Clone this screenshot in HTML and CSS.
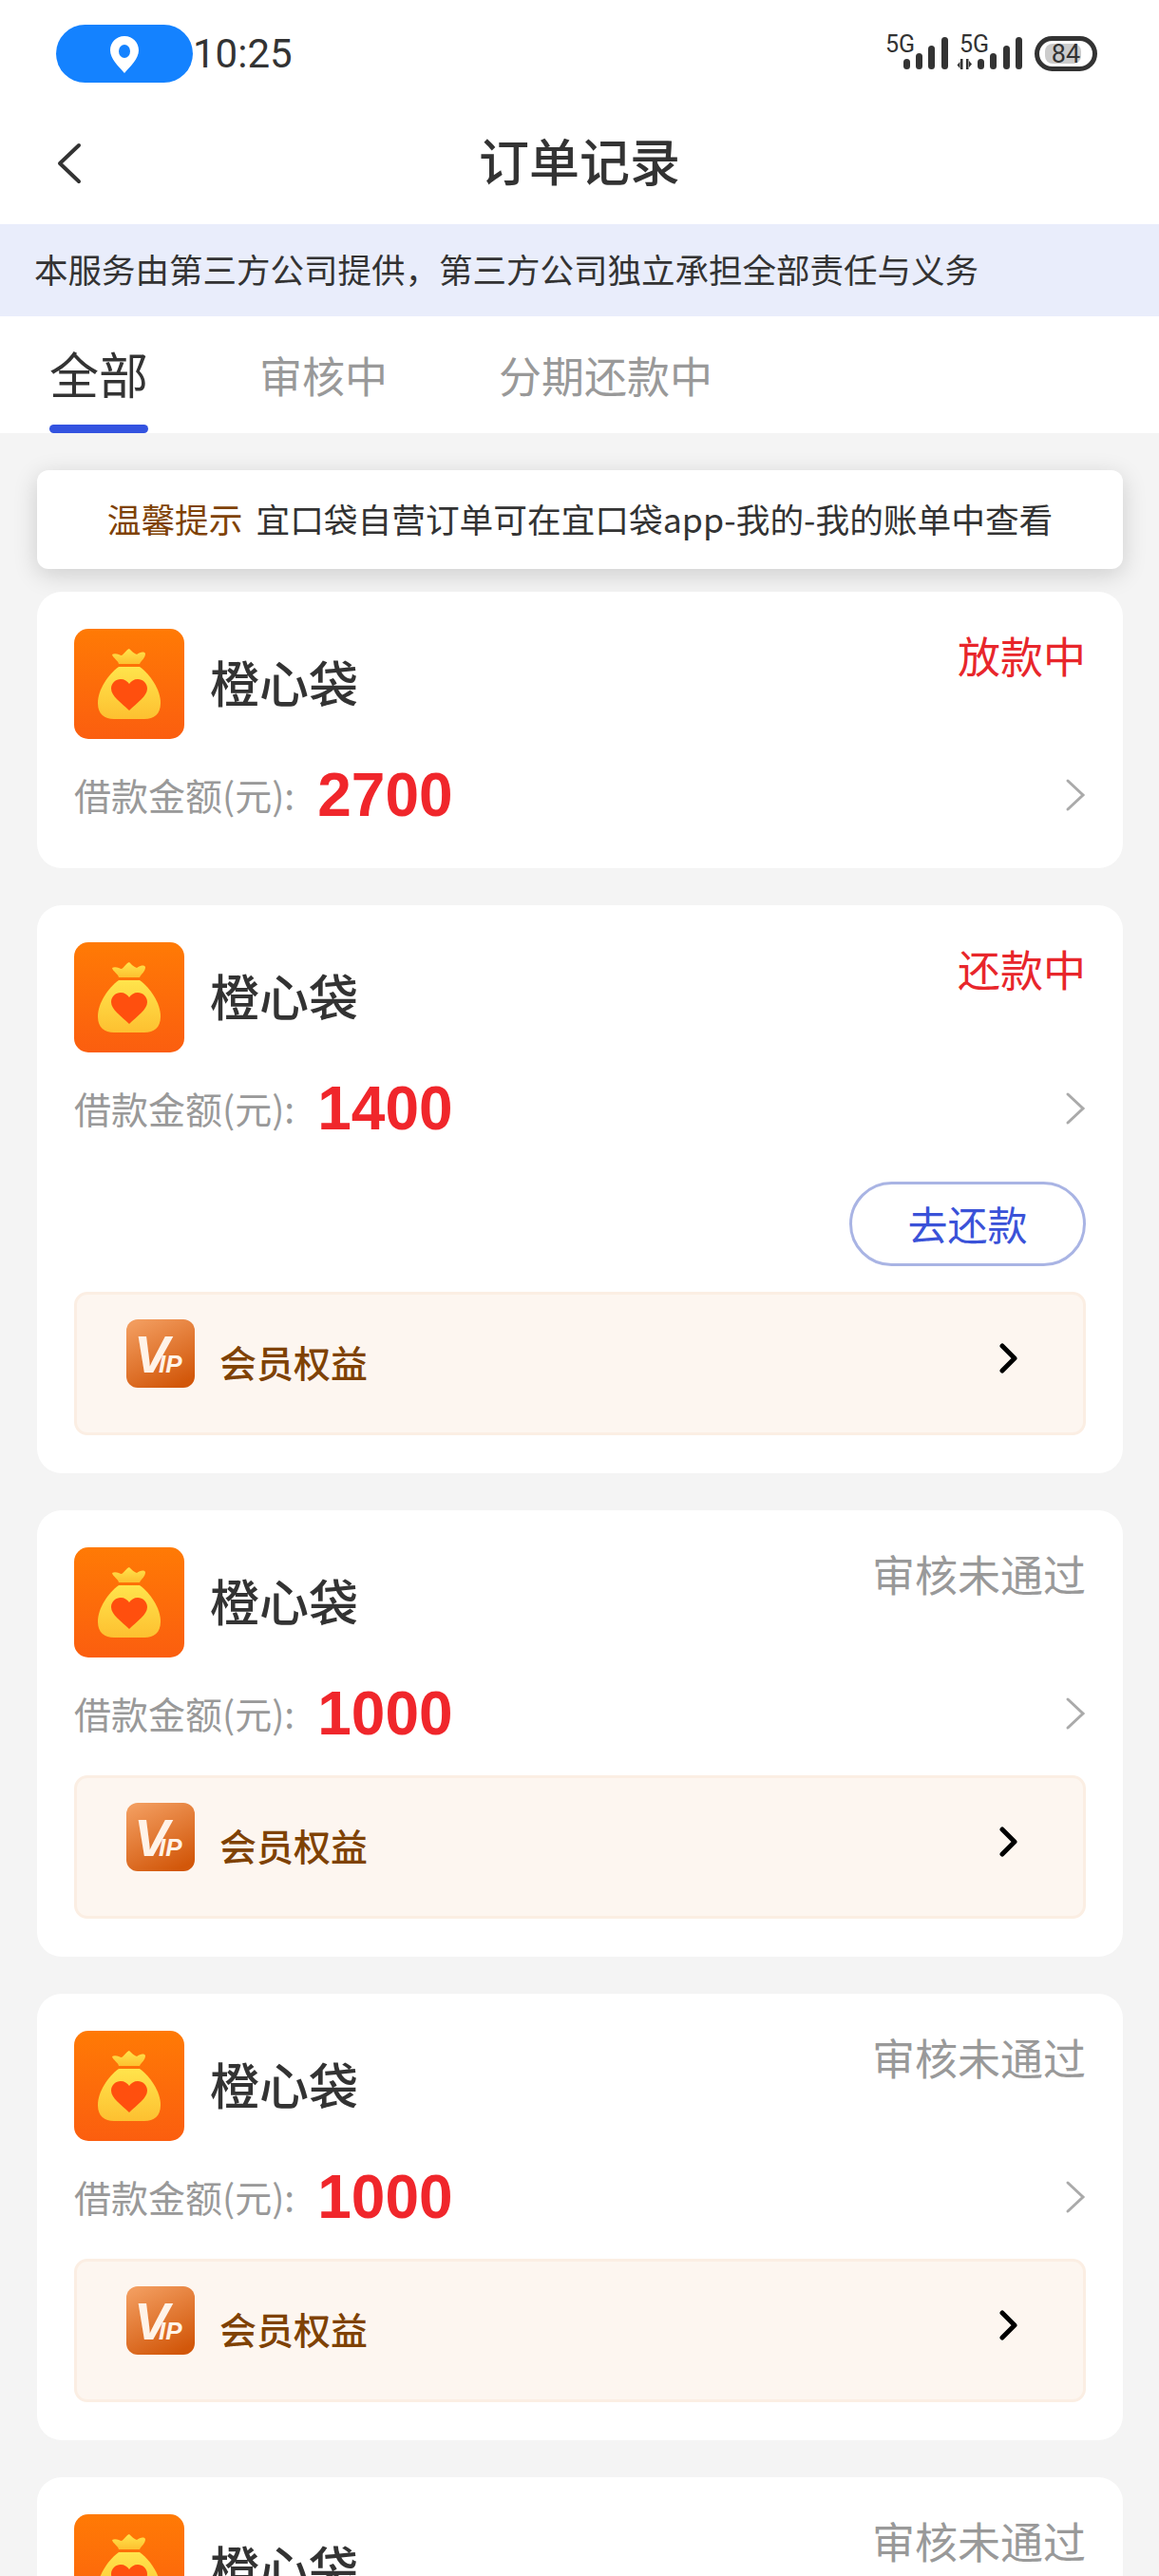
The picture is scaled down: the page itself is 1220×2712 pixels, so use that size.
FILE: index.html
```html
<!DOCTYPE html>
<html lang="zh-CN">
<head>
    <meta charset="UTF-8">
    <meta name="viewport" content="width=device-width, initial-scale=1.0">
    <title>订单记录</title>
    <link rel="stylesheet" href="styles.css">
</head>
<body>

    <svg class="defs">
        <defs>
            <linearGradient id="bagBg" x1="0" y1="0" x2="0" y2="1">
                <stop offset="0" stop-color="#ff7a05"/>
                <stop offset="1" stop-color="#fb5e0f"/>
            </linearGradient>
            <linearGradient id="bagFill" x1="0" y1="0" x2="0" y2="1">
                <stop offset="0" stop-color="#ffe44c"/>
                <stop offset="1" stop-color="#fdc030"/>
            </linearGradient>
            <linearGradient id="vipBg" x1="0.2" y1="0" x2="0.7" y2="1">
                <stop offset="0" stop-color="#f29c5e"/>
                <stop offset="1" stop-color="#d2570a"/>
            </linearGradient>
            <symbol id="bag" viewBox="0 0 116 116">
                <rect width="116" height="116" rx="15" fill="url(#bagBg)"/>
                <path d="M40 27C44 25 48 28 50 28C53 26 55 22 58 21C61 24 63 26 66 27C69 25 73 23 75 26C75 31 71 33 69 37H47C46 33 41 31 40 27Z" fill="url(#bagFill)"/>
                <path d="M47 40H69C80 48 91 64 91 78C91 90 84 95 74 95H42C32 95 25 90 25 78C25 64 36 48 47 40Z" fill="url(#bagFill)"/>
                <path d="M58 86C50 78 39 71 39 63C39 57 44 53 49 53C53 53 56 55 58 58C60 55 63 53 67 53C72 53 77 57 77 63C77 71 66 78 58 86Z" fill="#ff4f0e"/>
            </symbol>
            <symbol id="vip" viewBox="0 0 72 72">
                <rect width="72" height="72" rx="12" fill="url(#vipBg)"/>
                <text x="8" y="56" class="vip-v">V</text>
                <text x="34" y="56" class="vip-ip">IP</text>
            </symbol>
            <symbol id="arrow" viewBox="0 0 22 36">
                <polyline points="3,3 19,18 3,33" fill="none" stroke="#aaa" stroke-width="3" stroke-linecap="round"/>
            </symbol>
            <symbol id="arrowDark" viewBox="0 0 20 32">
                <polyline points="3,3 16,16 3,29" fill="none" stroke="#000" stroke-width="5" stroke-linecap="round" stroke-linejoin="round"/>
            </symbol>
        </defs>
    </svg>

    <div class="status-bar">
        <div class="location-pill">
            <svg width="32" height="40" viewBox="0 0 32 40">
                <path d="M16 1C7 1 1 8 1 16C1 25 10 33 16 40C22 33 31 25 31 16C31 8 25 1 16 1Z" fill="#fff"/>
                <ellipse cx="16" cy="17" rx="6" ry="7" fill="#1482ff"/>
            </svg>
        </div>
        <span class="time">10:25</span>
        <svg class="signal" width="230" height="60" viewBox="0 -9 230 60">
            <text x="7" y="19" class="net">5G</text>
            <rect x="26" y="26" width="7" height="11" rx="3.5"/>
            <rect x="39" y="20" width="7" height="17" rx="3.5"/>
            <rect x="52" y="12" width="7" height="25" rx="3.5"/>
            <rect x="66" y="3" width="7" height="34" rx="3.5"/>
            <text x="85" y="19" class="net">5G</text>
            <path d="M86 26h2.500v11h-2.500zM85.500 29l-3 3.500 3 3.500zM92 26h2.500v11h-2.500zM95 28l3 3.500-3 3.500z"/>
            <rect x="104" y="26" width="7" height="11" rx="3.5"/>
            <rect x="117" y="20" width="7" height="17" rx="3.5"/>
            <rect x="131" y="12" width="7" height="25" rx="3.5"/>
            <rect x="144" y="3" width="7" height="34" rx="3.5"/>
            <rect x="175" y="10" width="38" height="21" rx="8" fill="#ccc"/>
            <rect x="166.500" y="4.500" width="61" height="32" rx="16" fill="none" stroke="#333" stroke-width="5"/>
            <text x="197" y="30" class="batt">84</text>
        </svg>
    </div>

    <div class="nav">
        <svg class="back" width="28" height="44" viewBox="0 0 28 44">
            <polyline points="24,3 4,22 24,41" fill="none" stroke="#333" stroke-width="4" stroke-linecap="round" stroke-linejoin="round"/>
        </svg>
        <h1>订单记录</h1>
    </div>

    <div class="notice">本服务由第三方公司提供，第三方公司独立承担全部责任与义务</div>

    <div class="tabs">
        <div class="tab tab-on">全部</div>
        <div class="tab">审核中</div>
        <div class="tab">分期还款中</div>
    </div>

    <div class="list">
        <div class="tip"><span class="tip-label">温馨提示</span>宜口袋自营订单可在宜口袋app-我的-我的账单中查看</div>

        <div class="card card-plain">
            <div class="card-head">
                <svg class="logo"><use href="#bag"/></svg>
                <span class="name">橙心袋</span>
                <span class="status status-red">放款中</span>
            </div>
            <div class="row">
                <span class="label">借款金额(元):</span>
                <span class="amount">2700</span>
                <svg class="row-arrow"><use href="#arrow"/></svg>
            </div>
        </div>

        <div class="card">
            <div class="card-head">
                <svg class="logo"><use href="#bag"/></svg>
                <span class="name">橙心袋</span>
                <span class="status status-red">还款中</span>
            </div>
            <div class="row">
                <span class="label">借款金额(元):</span>
                <span class="amount">1400</span>
                <svg class="row-arrow"><use href="#arrow"/></svg>
            </div>
            <div class="pay-row"><div class="pay-btn">去还款</div></div>
            <div class="vip">
                <svg class="vip-icon"><use href="#vip"/></svg>
                <span class="vip-text">会员权益</span>
                <svg class="vip-arrow"><use href="#arrowDark"/></svg>
            </div>
        </div>

        <div class="card">
            <div class="card-head">
                <svg class="logo"><use href="#bag"/></svg>
                <span class="name">橙心袋</span>
                <span class="status">审核未通过</span>
            </div>
            <div class="row">
                <span class="label">借款金额(元):</span>
                <span class="amount">1000</span>
                <svg class="row-arrow"><use href="#arrow"/></svg>
            </div>
            <div class="vip">
                <svg class="vip-icon"><use href="#vip"/></svg>
                <span class="vip-text">会员权益</span>
                <svg class="vip-arrow"><use href="#arrowDark"/></svg>
            </div>
        </div>

        <div class="card">
            <div class="card-head">
                <svg class="logo"><use href="#bag"/></svg>
                <span class="name">橙心袋</span>
                <span class="status">审核未通过</span>
            </div>
            <div class="row">
                <span class="label">借款金额(元):</span>
                <span class="amount">1000</span>
                <svg class="row-arrow"><use href="#arrow"/></svg>
            </div>
            <div class="vip">
                <svg class="vip-icon"><use href="#vip"/></svg>
                <span class="vip-text">会员权益</span>
                <svg class="vip-arrow"><use href="#arrowDark"/></svg>
            </div>
        </div>

        <div class="card">
            <div class="card-head">
                <svg class="logo"><use href="#bag"/></svg>
                <span class="name">橙心袋</span>
                <span class="status">审核未通过</span>
            </div>
        </div>
    </div>

</body>
</html>
```
FILE: styles.css
```css
* {
    margin: 0;
    padding: 0;
    box-sizing: border-box;
}

html, body {
    height: 2712px;
    overflow: hidden;
}

body {
    font-family: "Noto Sans CJK SC", "Noto Sans", sans-serif;
    background-color: #f4f4f4;
    color: #333;
}

.defs {
    display: block;
    width: 0;
    height: 0;
}

.vip-v {
    font-family: "Liberation Sans", sans-serif;
    font-size: 56px;
    font-weight: 700;
    font-style: italic;
    fill: #fff3e8;
}

.vip-ip {
    font-family: "Liberation Sans", sans-serif;
    font-size: 26px;
    font-weight: 700;
    font-style: italic;
    fill: #fff3e8;
}

/* status bar */
.status-bar {
    display: flex;
    align-items: center;
    height: 107px;
    padding: 26px 65px 20px 59px;
    background: #fff;
}

.location-pill {
    display: flex;
    align-items: center;
    justify-content: center;
    width: 144px;
    height: 61px;
    border-radius: 31px;
    background: #1482ff;
}

.time {
    font-family: Roboto, sans-serif;
    font-size: 42px;
    color: #333;
}

.signal {
    margin-left: auto;
    fill: #333;
}

.net {
    font-family: Roboto, sans-serif;
    font-size: 25px;
    fill: #333;
}

.batt {
    font-family: Roboto, sans-serif;
    font-size: 27px;
    fill: #333;
    text-anchor: middle;
}

/* title */
.nav {
    display: grid;
    grid-template-columns: 1fr auto 1fr;
    align-items: center;
    height: 129px;
    padding-left: 59px;
    padding-right: 59px;
    background: #fff;
}

.nav h1 {
    margin-bottom: 7px;
    font-size: 53px;
    font-weight: 500;
    line-height: 70px;
    color: #333;
}

.notice {
    height: 97px;
    padding-left: 36px;
    font-size: 35.5px;
    line-height: 93px;
    color: #333;
    background: #e9edfb;
}

/* tabs */
.tabs {
    display: flex;
    gap: 117px;
    height: 123px;
    padding-left: 52px;
    background: #fff;
}

.tab {
    position: relative;
    font-size: 45px;
    line-height: 123px;
    color: #999;
}

.tab-on {
    font-size: 52px;
    line-height: 120px;
    color: #333;
}

.tab-on::after {
    content: "";
    position: absolute;
    left: 0;
    right: 0;
    bottom: 0;
    height: 9px;
    border-radius: 5px;
    background: #3353e0;
}

/* list */
.list {
    padding: 39px 38px 0 39px;
}

.tip {
    height: 104px;
    margin-bottom: 24px;
    font-size: 35.7px;
    line-height: 102px;
    text-align: center;
    color: #333;
    background: #fff;
    border-radius: 12px;
    box-shadow: 0 6px 26px rgba(0, 0, 0, 0.16);
}

.tip-label {
    margin-right: 14px;
    color: #7f4204;
}

.card {
    margin-bottom: 39px;
    padding: 39px 39px 40px;
    background: #fff;
    border-radius: 26px;
}

.card-plain {
    padding-bottom: 46px;
}

.card-head {
    display: flex;
    align-items: center;
}

.logo {
    flex: none;
    width: 116px;
    height: 116px;
}

.name {
    margin-left: 27px;
    margin-bottom: 6px;
    font-size: 52px;
    font-weight: 500;
    color: #333;
}

.status {
    align-self: flex-start;
    margin-left: auto;
    font-size: 45px;
    line-height: 56px;
    color: #999;
}

.status-red {
    color: #e8262b;
}

.row {
    display: flex;
    align-items: center;
    height: 60px;
    margin-top: 30px;
}

.label {
    margin-bottom: 5px;
    font-size: 39px;
    color: #999;
}

.amount {
    margin-left: 24px;
    margin-bottom: 2px;
    font-family: "Liberation Sans", sans-serif;
    font-size: 64px;
    font-weight: 700;
    color: #f0262b;
}

.row-arrow {
    width: 22px;
    height: 36px;
    margin-left: auto;
    margin-bottom: 2px;
}

.pay-row {
    display: flex;
    justify-content: flex-end;
    margin-top: 46px;
}

.pay-btn {
    width: 249px;
    height: 89px;
    font-size: 42px;
    line-height: 81px;
    text-align: center;
    color: #3a52d8;
    border: 3px solid #a9b4e4;
    border-radius: 45px;
}

.vip {
    display: flex;
    align-items: center;
    height: 151px;
    margin-top: 34px;
    padding: 0 68px 0 52px;
    background: #fdf6f0;
    border: 3px solid #fbeee3;
    border-radius: 14px;
}

.pay-row + .vip {
    margin-top: 27px;
}

.vip-icon {
    flex: none;
    width: 72px;
    height: 72px;
    margin-bottom: 21px;
}

.vip-text {
    margin-left: 26px;
    margin-bottom: 6px;
    font-size: 39px;
    font-weight: 500;
    color: #7f4204;
}

.vip-arrow {
    width: 20px;
    height: 32px;
    margin-left: auto;
    margin-bottom: 12px;
}
```
